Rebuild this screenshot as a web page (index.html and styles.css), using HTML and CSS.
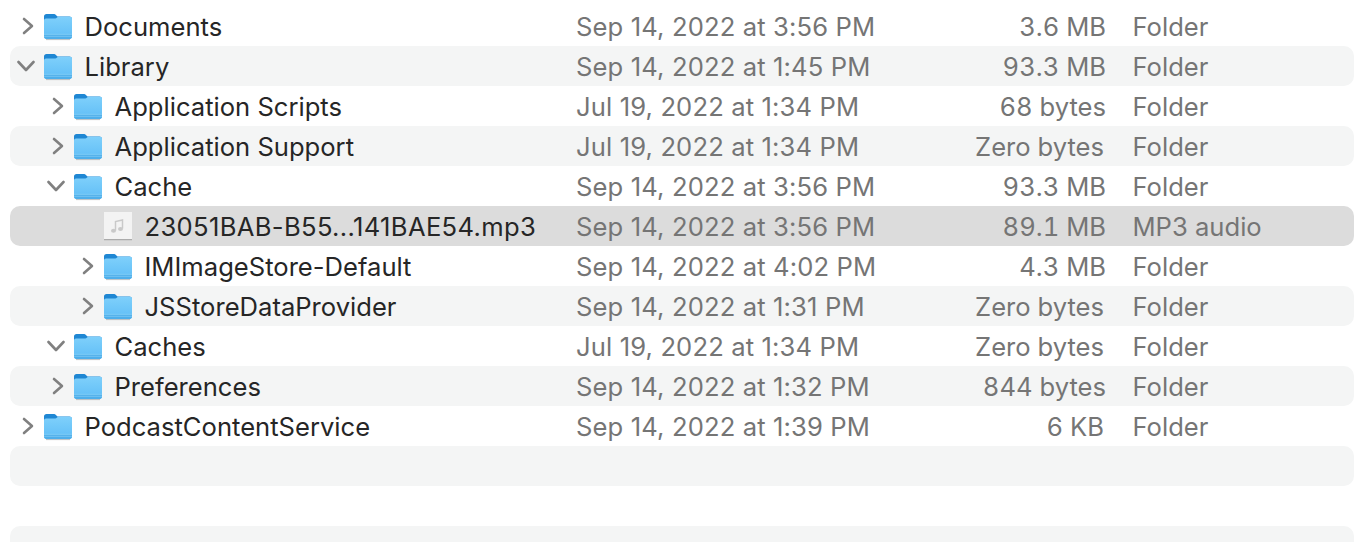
FILE: index.html
```html
<!DOCTYPE html>
<html lang="en">
<head>
<meta charset="utf-8">
<title>Finder list</title>
<link rel="stylesheet" href="styles.css">
</head>
<body>
<svg class="defs" width="0" height="0" aria-hidden="true">
  <defs>
    <linearGradient id="fb" x1="0" y1="0" x2="0" y2="1"><stop offset="0" stop-color="#7fd0fb"/><stop offset="1" stop-color="#5fbdf6"/></linearGradient>
    <symbol id="folder" viewBox="0 0 30 30">
      <path d="M1 5.500C1 4 2 3 3.500 3h7.200c1 0 1.500.3 2.200 1l1.600 1.600H26.500C28 5.600 29 6.600 29 8v4H1z" fill="#1f87d3"/>
      <path d="M1 9.500C1 8.300 1.900 7.500 3 7.500h8.800c1 0 1.500-.3 2.200-1 .5-.5 1-.8 1.800-.8H27c1.200 0 2 .9 2 2.100V25.500c0 1.400-1 2.500-2.500 2.500h-23C2 28 1 26.900 1 25.500z" fill="url(#fb)"/>
      <path d="M1 23.800h28v1.700c0 1.400-1 2.500-2.500 2.500h-23C2 28 1 26.900 1 25.500z" fill="#4eaeea"/>
      <path d="M1 23.300h28M1 25.300h28" stroke="#8fd2f7" stroke-width=".6"/>
      <path d="M3 28.600h24" stroke="#a9adb0" stroke-width=".8"/>
    </symbol>
    <symbol id="right" viewBox="0 0 14 18"><path d="M3 2 11 9 3 16" fill="none" stroke="#808080" stroke-width="2.600" stroke-linecap="round" stroke-linejoin="round"/></symbol>
    <symbol id="down" viewBox="0 0 18 14"><path d="M1.500 3 9 11 16.500 3" fill="none" stroke="#808080" stroke-width="2.600" stroke-linecap="round" stroke-linejoin="round"/></symbol>
  </defs>
</svg>
<main class="list">
  <div class="row first">
    <div class="name d0"><svg class="tw-r"><use href="#right"/></svg><svg class="ico"><use href="#folder"/></svg><span class="txt">Documents</span></div>
    <div class="date txt">Sep 14, 2022 at 3:56 PM</div><div class="size txt">3.6 MB</div><div class="kind txt">Folder</div>
  </div>
  <div class="row alt">
    <div class="name d0"><svg class="tw-d"><use href="#down"/></svg><svg class="ico"><use href="#folder"/></svg><span class="txt">Library</span></div>
    <div class="date txt">Sep 14, 2022 at 1:45 PM</div><div class="size txt">93.3 MB</div><div class="kind txt">Folder</div>
  </div>
  <div class="row">
    <div class="name d1"><svg class="tw-r"><use href="#right"/></svg><svg class="ico"><use href="#folder"/></svg><span class="txt">Application Scripts</span></div>
    <div class="date txt">Jul 19, 2022 at 1:34 PM</div><div class="size txt">68 bytes</div><div class="kind txt">Folder</div>
  </div>
  <div class="row alt">
    <div class="name d1"><svg class="tw-r"><use href="#right"/></svg><svg class="ico"><use href="#folder"/></svg><span class="txt">Application Support</span></div>
    <div class="date txt">Jul 19, 2022 at 1:34 PM</div><div class="size txt inset">Zero bytes</div><div class="kind txt">Folder</div>
  </div>
  <div class="row">
    <div class="name d1"><svg class="tw-d"><use href="#down"/></svg><svg class="ico"><use href="#folder"/></svg><span class="txt">Cache</span></div>
    <div class="date txt">Sep 14, 2022 at 3:56 PM</div><div class="size txt">93.3 MB</div><div class="kind txt">Folder</div>
  </div>
  <div class="row sel">
    <div class="name d2"><span class="tw-none"></span>
      <svg class="ico" viewBox="0 0 30 30">
        <rect x="1" y="1" width="28" height="28" fill="#f3f3f3"/>
        <path d="M1 28.700h28" stroke="#9a9a9a" stroke-width="1"/>
        <path d="M12.500 19.500V10.500l7-1.500v8.500" fill="none" stroke="#c9c9c9" stroke-width="1.500"/>
        <ellipse cx="10.500" cy="19.800" rx="2.500" ry="2" fill="#c9c9c9"/>
        <ellipse cx="17.500" cy="18" rx="2.500" ry="2" fill="#c9c9c9"/>
      </svg>
      <span class="txt hash">23051BAB-B55...141BAE54.mp3</span></div>
    <div class="date txt">Sep 14, 2022 at 3:56 PM</div><div class="size txt">89.1 MB</div><div class="kind txt">MP3 audio</div>
  </div>
  <div class="row">
    <div class="name d2"><svg class="tw-r"><use href="#right"/></svg><svg class="ico"><use href="#folder"/></svg><span class="txt">IMImageStore-Default</span></div>
    <div class="date txt">Sep 14, 2022 at 4:02 PM</div><div class="size txt">4.3 MB</div><div class="kind txt">Folder</div>
  </div>
  <div class="row alt">
    <div class="name d2"><svg class="tw-r"><use href="#right"/></svg><svg class="ico"><use href="#folder"/></svg><span class="txt">JSStoreDataProvider</span></div>
    <div class="date txt">Sep 14, 2022 at 1:31 PM</div><div class="size txt inset">Zero bytes</div><div class="kind txt">Folder</div>
  </div>
  <div class="row">
    <div class="name d1"><svg class="tw-d"><use href="#down"/></svg><svg class="ico"><use href="#folder"/></svg><span class="txt">Caches</span></div>
    <div class="date txt">Jul 19, 2022 at 1:34 PM</div><div class="size txt inset">Zero bytes</div><div class="kind txt">Folder</div>
  </div>
  <div class="row alt">
    <div class="name d1"><svg class="tw-r"><use href="#right"/></svg><svg class="ico"><use href="#folder"/></svg><span class="txt">Preferences</span></div>
    <div class="date txt">Sep 14, 2022 at 1:32 PM</div><div class="size txt">844 bytes</div><div class="kind txt">Folder</div>
  </div>
  <div class="row">
    <div class="name d0"><svg class="tw-r"><use href="#right"/></svg><svg class="ico"><use href="#folder"/></svg><span class="txt">PodcastContentService</span></div>
    <div class="date txt">Sep 14, 2022 at 1:39 PM</div><div class="size txt inset">6 KB</div><div class="kind txt">Folder</div>
  </div>
  <div class="row alt"></div>
  <div class="row"></div>
  <div class="row alt"></div>
</main>
</body>
</html>
```

FILE: styles.css
```css
html, body { margin: 0; padding: 0; background: #fff; height: 542px; overflow: hidden; }
.defs { position: absolute; }
.list {
  padding: 6px 0 0 10px;
  font-family: Inter, "Liberation Sans", sans-serif;
  font-size: 25.6px;
}
.row {
  display: flex;
  align-items: center;
  height: 40px;
  border-radius: 10px;
  color: #757575;
}
.alt { background: #f4f5f5; }
.sel { background: #dcdcdc; }
.name {
  box-sizing: border-box;
  display: flex;
  align-items: center;
  width: 566px;
  flex: none;
  color: #262626;
  white-space: nowrap;
}
.hash { letter-spacing: .33px; }
.d0 { padding-left: 8px; }
.d1 { padding-left: 38px; }
.d2 { padding-left: 68px; }
.tw-r, .tw-d, .tw-none { flex: none; }
.tw-r { width: 14px; height: 18px; margin: 0 8px 0 3px; }
.tw-d { width: 18px; height: 14px; margin: 0 8px 0 -1px; }
.tw-none { width: 14px; height: 18px; margin: 0 8px 0 3px; }
.ico { flex: none; width: 30px; height: 30px; margin: -1px 11.500px 0 0; }
.date { width: 390px; flex: none; white-space: nowrap; letter-spacing: .13px; }
.size { box-sizing: border-box; width: 140px; flex: none; text-align: right; white-space: nowrap; font-variant-numeric: tabular-nums; }
.inset { padding-right: 2px; }
.kind { margin-left: 26.500px; white-space: nowrap; }
```
